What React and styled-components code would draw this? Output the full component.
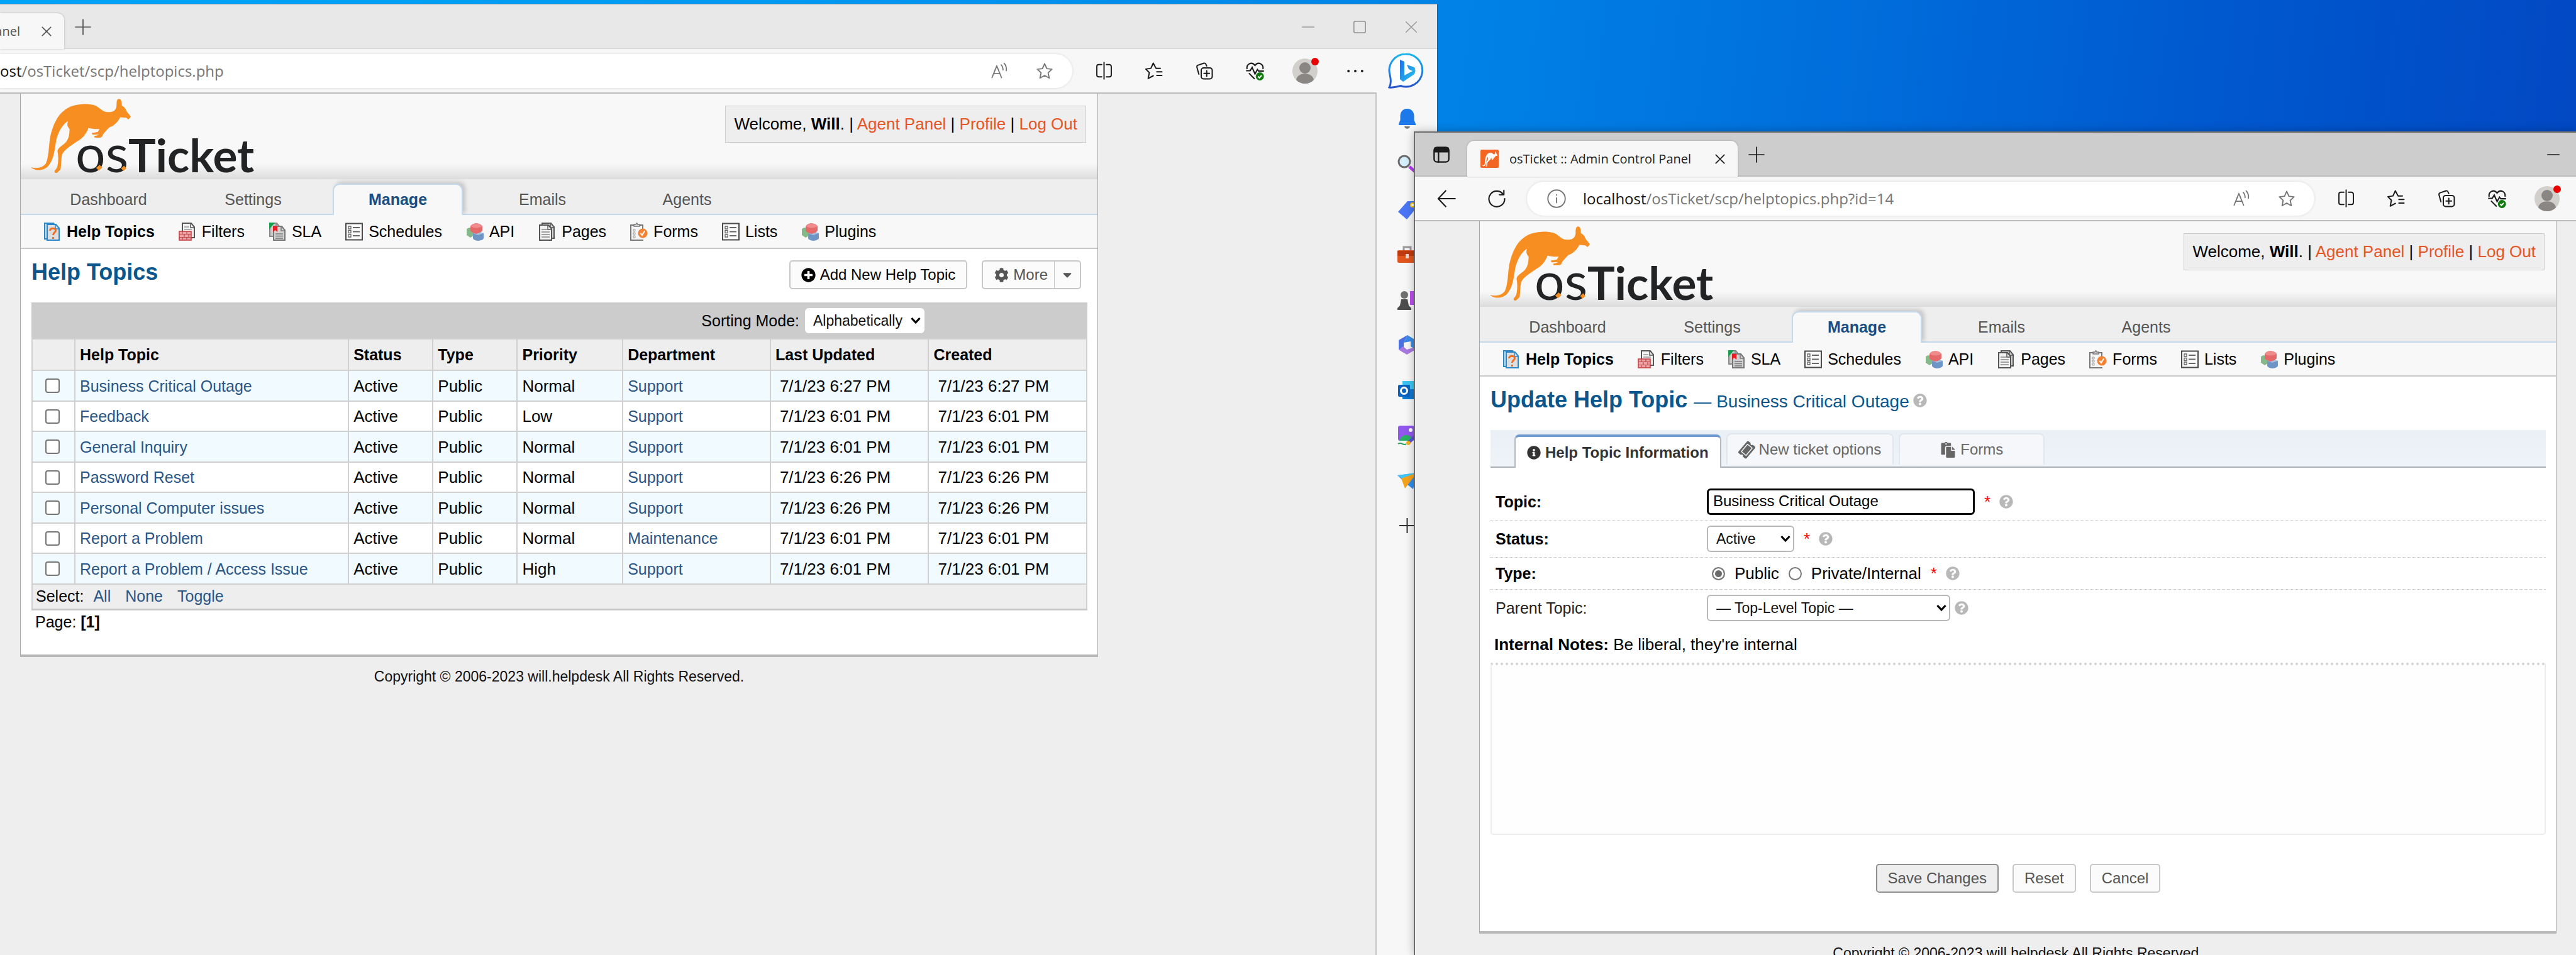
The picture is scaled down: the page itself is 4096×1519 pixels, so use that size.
import React from "react";
import styled, { createGlobalStyle, css } from "styled-components";
import {
  FaPlusCircle, FaCog, FaCaretDown, FaInfoCircle, FaQuestionCircle, FaTicketAlt, FaPaste,
} from "react-icons/fa";

const sans = `"Liberation Sans", Arial, sans-serif`;
const ui = `"Open Sans", "Noto Sans", sans-serif`;

const GlobalStyle = createGlobalStyle`
  *, *::before, *::after { box-sizing: border-box; }
  html, body, #root { height: 100%; margin: 0; }
  body { overflow: hidden; font-family: ${sans}; font-size: 25px; color: #000; }
  button, input, select, textarea { font-family: inherit; color: inherit; margin: 0; }
  a { text-decoration: none; }
`;

/* ---------- desktop and windows ---------- */

const Desktop = styled.main`
  position: relative;
  height: 100vh;
  overflow: hidden;
  background: linear-gradient(97deg, #00a4f8 0%, #0098f2 30%, #0080e5 56%, #006fdc 68%, #0058ce 83%, #0244c0 100%);
`;

const Window = styled.section`
  position: absolute;
  display: flex;
  flex-direction: column;
  overflow: hidden;
  bottom: 0;
  background: #f7f7f7;
`;

const ListWindow = styled(Window)`
  top: 6px;
  left: 0;
  right: 1810px;
  border-top: 1px solid #8a96a0;
  border-right: 1px solid #1f5f94;
`;

const EditWindow = styled(Window)`
  top: 209px;
  left: 2248px;
  right: 0;
  border-top: 2px solid #6d6d6d;
  border-left: 2px solid #6d6d6d;
  box-shadow: 0 0 14px rgba(0, 0, 0, 0.25);
`;

const TabStrip = styled.div`
  display: flex;
  flex: none;
  height: ${(p) => (p.$active ? 70 : 71)}px;
  background: ${(p) => (p.$active ? "#cdcdcd" : "#e8e8e8")};
  box-shadow: inset 0 -2px 0 ${(p) => (p.$active ? "#bdbdbd" : "#d9d9d9")};
`;

const BrowserTab = styled.div`
  display: flex;
  align-items: center;
  justify-content: flex-end;
  align-self: flex-end;
  height: 57px;
  width: ${(p) => p.$width}px;
  padding: 0 18px 0 ${(p) => (p.$cut ? 0 : 21)}px;
  overflow: hidden;
  background: #f7f7f7;
  border-radius: ${(p) => (p.$cut ? "0 11px 0 0" : "11px 11px 0 0")};
  box-shadow: 0 0 3px rgba(0, 0, 0, 0.25);
  font: 20px/30px ${ui};
  color: ${(p) => (p.$cut ? "#555" : "#1b1b1b")};
  white-space: nowrap;
`;

const TabTitle = styled.span`
  flex: ${(p) => (p.$cut ? "none" : 1)};
  margin-left: ${(p) => (p.$cut ? 0 : 17)}px;
  margin-right: ${(p) => (p.$cut ? 32 : 0)}px;
`;

const PlainButton = styled.button`
  display: flex;
  align-items: center;
  justify-content: center;
  flex: none;
  width: ${(p) => p.$width || 80}px;
  padding: 0;
  border: 0;
  background: none;
  color: ${(p) => p.$color || "#1b1b1b"};
`;

const Caption = styled.div`
  display: flex;
  margin-left: auto;
`;

const Toolbar = styled.div`
  display: flex;
  align-items: center;
  flex: none;
  height: 69px;
  padding: 0 ${(p) => p.$right}px 0 ${(p) => p.$left}px;
`;

const AddressBar = styled.div`
  display: flex;
  align-items: center;
  flex: 1;
  height: 54px;
  margin: 0 10px 0 ${(p) => (p.$cut ? 0 : 8)}px;
  padding: 0 8px 0 ${(p) => (p.$cut ? 0 : 32)}px;
  background: #fff;
  border-radius: ${(p) => (p.$cut ? "0 27px 27px 0" : "27px")};
  box-shadow: 0 0 4px rgba(0, 0, 0, 0.12);
  font: 24px/32px ${ui};
  color: #767676;
`;

const Url = styled.span`
  flex: 1;
  margin-left: ${(p) => (p.$cut ? 0 : 27)}px;
  b { font-weight: 400; color: #111; }
`;

const WindowBody = styled.div`
  display: flex;
  flex: 1;
  min-height: 0;
`;

const Viewport = styled.div`
  flex: 1;
  min-width: 0;
  padding: 0 ${(p) => p.$right}px 0 ${(p) => p.$left}px;
  background: #eee;
  border-top: 2px solid #bcbcbc;
  border-right: ${(p) => (p.$edge ? "2px solid #c4c4c4" : 0)};
`;

const Sidebar = styled.nav`
  display: flex;
  flex-direction: column;
  align-items: center;
  width: 96px;
  padding-top: 6px;
`;

const SideButton = styled(PlainButton)`
  height: 72px;
`;

/* ---------- osTicket page ---------- */

const Container = styled.div`
  background: #fff;
  border: 1px solid #aaa;
  border-top: 0;
  border-bottom: 4px solid #b8b8b8;
`;

const Header = styled.header`
  display: flex;
  justify-content: space-between;
  align-items: flex-start;
  height: 136px;
  padding: 0 18px 0 7px;
  background: linear-gradient(#f8f8f8 82%, #dcdcdc);
`;

const Welcome = styled.p`
  margin: 19px 0 0;
  padding: 0 13px;
  border: 1px solid #ccc;
  background: #eee;
  font-size: 26px;
  line-height: 57px;
  white-space: pre;
  a { color: #e65524; }
`;

const MainNav = styled.nav`
  display: flex;
  align-items: flex-end;
  gap: 23px;
  height: 57px;
  padding-left: 36px;
  background: #eee;
  box-shadow: inset 0 -2px 0 #c5d9ec;
`;

const MainTab = styled.a`
  width: 207px;
  height: 50px;
  border: 2px solid transparent;
  border-bottom: 0;
  font-size: 25px;
  line-height: 46px;
  text-align: center;
  color: #555;
  ${(p) => p.$active && css`
    border-color: #c5d9ec;
    border-radius: 11px 11px 0 0;
    background: #f8f8f8;
    box-shadow: 4px -3px 6px rgba(0, 0, 0, 0.17);
    clip-path: inset(-12px -12px 0 -12px);
    font-weight: 700;
    color: #184e81;
  `}
`;

const SubNav = styled.nav`
  display: flex;
  align-items: center;
  gap: 38px;
  height: 54px;
  padding-left: 36px;
  background: #f8f8f8;
  border-bottom: 2px solid #c9c9c9;
`;

const SubLink = styled.a`
  display: flex;
  align-items: center;
  gap: 9px;
  font-size: 25px;
  line-height: 30px;
  font-weight: ${(p) => (p.$active ? 700 : 400)};
  color: #000;
`;

const Content = styled.div`
  padding: 0 16px 0 17px;
`;

const Title = styled.h2`
  display: flex;
  align-items: baseline;
  align-self: flex-start;
  margin: 0;
  font-size: 36px;
  line-height: 38px;
  color: #0a568e;
  white-space: pre;
  small { font-size: 28px; font-weight: 400; }
`;

const Copyright = styled.footer`
  padding-top: 17px;
  font-size: 23px;
  line-height: 28px;
  text-align: center;
  color: #111;
`;

const TitleRow = styled.div`
  display: flex;
  align-items: center;
  gap: 23px;
  padding: 18px 10px 21px 0;
  ${Title} { flex: 1; }
`;

const Button = styled.button`
  display: flex;
  align-items: center;
  gap: 7px;
  height: 46px;
  padding: 0 17px;
  border: 2px solid ${(p) => (p.$primary ? "#8f8f8f" : "#c8c8c8")};
  border-radius: 5px;
  background: ${(p) => (p.$primary ? "#eee" : "#fbfbfb")};
  font-size: 24px;
  line-height: 30px;
  color: ${(p) => (p.$dark ? "#000" : "#555")};
`;

const SplitButton = styled.div`
  display: flex;
  ${Button}:first-child { border-right: 0; border-radius: 5px 0 0 5px; padding: 0 10px 0 18px; }
  ${Button}:last-child { border-left-width: 1px; border-radius: 0 5px 5px 0; padding: 0 9px; }
`;

/* ---------- form controls ---------- */

const SelectBox = styled.span`
  position: relative;
  display: inline-flex;
  width: ${(p) => p.$width}px;
  svg { position: absolute; right: 6px; top: 50%; margin-top: -6px; pointer-events: none; }
`;

const NativeSelect = styled.select`
  appearance: none;
  width: 100%;
  height: ${(p) => (p.$bare ? 40 : 42)}px;
  padding: 0 0 0 13px;
  border: ${(p) => (p.$bare ? 0 : "2px solid #b9b9b9")};
  border-radius: 6px;
  background: #fff;
  font-size: 23px;
  color: #111;
`;

const Checkbox = styled.input`
  appearance: none;
  display: block;
  width: 23px;
  height: 23px;
  margin: 0 auto;
  border: 2px solid #767676;
  border-radius: 4px;
  background: #fff;
`;

const Radio = styled.input`
  appearance: none;
  width: 21px;
  height: 21px;
  margin: 0 15px 0 0;
  border: 2px solid #767676;
  border-radius: 50%;
  background: #fff;
  &:checked { box-shadow: inset 0 0 0 3px #fff; background: #6b6b6b; }
`;

/* ---------- topics table ---------- */

const Table = styled.table`
  width: 100%;
  table-layout: fixed;
  border-collapse: collapse;
  font-size: 25px;
  line-height: 30px;
  caption {
    height: 57px;
    padding: 9px 259px 8px 0;
    background: #ccc;
  }
  th, td { padding: 0 0 0 7px; border: 2px solid #d0d0d0; text-align: left; white-space: nowrap; }
  th { height: 50px; background: #eee; }
  td a { font-size: 25px; color: #2a5587; }
  tbody td { height: 48px; font-size: 26px; }
  tbody tr:nth-child(odd) td { height: 49px; background: #f1faff; }
  td:first-child { padding: 0 4px 0 0; }
  tfoot td:first-child { height: 40px; padding: 0 0 2px 5px; background: #eee; border-bottom: 3px solid #c9c9c9; }
`;

const SortLine = styled.div`
  display: flex;
  align-items: center;
  justify-content: flex-end;
  gap: 9px;
`;

const SelectLinks = styled.div`
  display: flex;
  gap: 23px;
  span { margin-right: -8px; }
`;

const DateCell = styled.td`
  && { padding-left: 14px; }
`;

const Pager = styled.p`
  margin: 0;
  padding: 3px 6px 37px;
  font-size: 25px;
  line-height: 30px;
`;

/* ---------- edit form ---------- */

const FormTabs = styled.div`
  display: flex;
  gap: 8px;
  height: 60px;
  margin-top: 5px;
  padding: 0 38px;
  background: linear-gradient(#eaf0f6, #eff3f8);
  box-shadow: inset 0 -2px 0 #aab0b6;
`;

const FormTab = styled.button`
  display: flex;
  align-items: center;
  justify-content: center;
  gap: 7px;
  min-width: ${(p) => p.$min || 0}px;
  height: 50px;
  margin-top: 5px;
  padding: 0 18px;
  border: 2px solid #e2e6ee;
  border-bottom: 0;
  border-radius: 8px 8px 0 0;
  background: #f5f7fb;
  font-size: 24px;
  line-height: 30px;
  color: #666;
  ${(p) => p.$active && css`
    height: 53px;
    margin-top: 7px;
    padding: 0 18px;
    border: 2px solid #b4bac2;
    border-top: 4px solid #6f9bd1;
    border-bottom: 0;
    background: #fff;
    font-weight: 700;
    color: #333;
  `}
`;

const Form = styled.form`
  padding-top: 25px;
`;

const Field = styled.div`
  display: grid;
  grid-template-columns: 344px 1fr;
  align-items: center;
  padding: 8px 0;
  border-bottom: 1px dotted ${(p) => (p.$last ? "transparent" : "#c4c4c4")};
  font-size: 26px;
  line-height: 34px;
`;

const FieldLabel = styled.label`
  padding-left: 8px;
  font-size: 25px;
  font-weight: ${(p) => (p.$plain ? 400 : 700)};
  color: ${(p) => (p.$plain ? "#222" : "#000")};
`;

const Controls = styled.div`
  display: flex;
  align-items: center;
`;

const RadioGroup = styled.div`
  display: flex;
  gap: 15px;
  margin-left: 8px;
  label { display: flex; align-items: center; }
`;

const TextInput = styled.input`
  width: 426px;
  height: 42px;
  padding: 0 7px 2px;
  border: 3px solid #000;
  border-radius: 6px;
  background: #fff;
  font-size: 24px;
  outline: 0;
`;

const Required = styled.span`
  margin: 0 14px 0 15px;
  color: #f00;
`;

const Help = styled(FaQuestionCircle)`
  width: 22px;
  height: 22px;
  color: #b8b8b8;
  margin-left: ${(p) => p.$gap || 0}px;
`;

const NotesLabel = styled.label`
  display: block;
  padding-left: 6px;
  font-size: 26px;
  line-height: 57px;
`;

const Notes = styled.textarea`
  display: block;
  width: 100%;
  height: 274px;
  border: 2px solid #ededed;
  border-top: 4px dotted #d4d4d4;
  border-radius: 0 0 5px 5px;
  background: #fefefe;
  resize: none;
`;

const Actions = styled.div`
  display: flex;
  justify-content: center;
  gap: 22px;
  padding: 46px 0 61px;
`;

/* ---------- drawings ---------- */

const Stroke = ({ size = 28, children, w = 1.6 }) => (
  <svg width={size} height={size} viewBox="0 0 24 24" fill="none" stroke="currentColor" strokeWidth={w} strokeLinecap="round" strokeLinejoin="round" aria-hidden="true">
    {children}
  </svg>
);

const Chevron = () => (
  <svg width="16" height="12" viewBox="0 0 16 12" fill="none" stroke="#000" strokeWidth="3.2" aria-hidden="true">
    <path d="M1.5 2 8 9l6.500-7" />
  </svg>
);

const KANGAROO = "M488 27C500 28 505 40 504 62C518 68 525 80 530 94L550 118C550 124 546 126 538 135L527 126L496 123C485 145 468 165 440 176C428 186 412 205 405 215C402 226 396 230 385 230L362 229C356 222 364 218 372 219L386 213L352 214C344 208 348 203 358 204L378 200L388 184C370 186 348 184 330 179C320 205 305 230 270 250C240 272 205 290 192 318C186 345 188 372 184 396C178 402 172 408 166 413C156 417 150 410 154 402C160 396 166 388 168 378C174 350 172 320 168 300C170 285 185 276 205 260C225 245 231 215 231 185C220 172 216 160 223 144C195 160 175 195 162 240C152 300 150 340 120 378C100 400 60 410 28 384C55 392 85 390 105 368C122 340 122 280 128 240C135 190 160 120 200 90C240 55 310 48 360 60C385 68 395 88 420 95C440 97 460 98 470 82C479 70 476 55 477 45C478 34 482 27 488 27Z";

const Logo = () => (
  <svg width="375" height="137" viewBox="0 0 1230 450" role="img" aria-label="osTicket">
    <path d={KANGAROO} fill="#f68e22" />
    <text x="262" y="410" fontFamily="Lato, 'Open Sans', sans-serif" fill="#212325">
      <tspan fontSize="276" fontWeight="400">os</tspan><tspan fontSize="240" fontWeight="700">Ticket</tspan>
    </text>
    <path d="m370 388 18-16 14 14-18 16zM500 390l16-14 12 14-16 14z" fill="#f68e22" />
  </svg>
);

const Sheet = ({ x = 0, y = 0, w = 20, h = 26, fill = "#f2f2f2", stroke = "#555" }) => (
  <g transform={`translate(${x} ${y})`}>
    <path d={`M1 1H${w - 6}L${w - 1} 7V${h - 1}H1Z`} fill={fill} stroke={stroke} strokeWidth="2" />
    <path d={`M${w - 7} 1V8H${w - 1}`} fill="none" stroke={stroke} strokeWidth="1.5" />
  </g>
);

const NavIcon = ({ kind }) => (
  <svg width="28" height="29" viewBox="0 0 28 29" aria-hidden="true">
    {kind === "help" && <>
      <Sheet x={1} w={21} h={27} stroke="#2b87c8" fill="#cfe3f2" />
      <Sheet x={5} y={2} w={21} h={27} stroke="#2b87c8" fill="#dcdfe2" />
      <path d="M10.500 13c0-5 9-5 9 0 0 3-4 3-4 7M15.500 23v3" fill="none" stroke="#f36f21" strokeWidth="3" />
    </>}
    {kind === "filter" && <>
      <Sheet x={5} w={21} h={25} />
      <path d="M9 7h8M9 11h12" stroke="#999" strokeWidth="1.500" />
      <rect x="1" y="14" width="19" height="14" fill="#eda3a5" stroke="#c43a3e" strokeWidth="1.500" />
      <path d="M1 18.500h19M1 23.500h19M6 14v4M13 14v4M9 19v4M16 19v4M6 24v4M13 24v4" stroke="#c0494c" strokeWidth="1.200" />
    </>}
    {kind === "sla" && <>
      <Sheet x={1} w={18} h={23} fill="#c9c9c9" stroke="#888" />
      <path d="M1 0h9L1 11z" fill="#14a04a" />
      <Sheet x={7} y={5} w={20} h={24} fill="#d2d2d2" stroke="#777" />
      <path d="M7 6h7v9l-3.500-3L7 15z" fill="#ed1c24" />
      <path d="M11 18h12M11 21.500h12M11 25h12" stroke="#777" strokeWidth="1.600" />
    </>}
    {kind === "list" && <>
      <rect x="1" y="1.500" width="26" height="26" fill="#fbfbfb" stroke="#4b4b4b" strokeWidth="2" />
      <path d="M12 8h11M12 14.500h11M12 21h11" stroke="#666" strokeWidth="2" />
      <path d="M5 6h4v4H5zM5 12.500h4v4H5zM5 19h4v4H5z" fill="none" stroke="#666" strokeWidth="1.300" />
    </>}
    {kind === "api" && <>
      <path d="M1 11q0-2 5-3l6 3v10l-5 3-6-4z" fill="#86b98a" />
      <path d="M11 17l8-3 9 3v8q-1 3-9 4-7-1-8-4z" fill="#6f95c6" />
      <path d="M11 17l8 3 9-3-9-3z" fill="#a3bee0" />
      <path d="M7 6q2-4 9-5 8 1 10 5v7q-2 3-10 5-7-2-9-5z" fill="#e5686b" />
      <path d="M7 6q9 5 19 0-2-4-10-5-7 1-9 5z" fill="#f08b8b" />
    </>}
    {kind === "page" && <>
      <Sheet x={5} w={21} h={26} stroke="#555" fill="#d8d8d8" />
      <Sheet x={1} y={3} w={21} h={26} stroke="#555" />
      <path d="M5 11h9M5 15h13M5 19h13M5 23h13" stroke="#888" strokeWidth="1.500" />
    </>}
    {kind === "form" && <>
      <path d="M20 11V4H1v24h20" fill="#f6f6f6" stroke="#777" strokeWidth="2" />
      <path d="M6 6V3h3l1.500-2.500L12 3h3v3z" fill="#ddd" stroke="#777" strokeWidth="1.400" />
      <path d="M5 11h3v3H5zM5 16h3v3H5zM5 21h3v3H5z" fill="none" stroke="#999" />
      <circle cx="20" cy="17" r="7.500" fill="#f58230" />
      <path d="m16.500 17 2.500 3 4-6.500" fill="none" stroke="#fff" strokeWidth="2" />
    </>}
  </svg>
);

const IconStar = () => <Stroke><path d="m12 2 3 6.700 7 .8-5.200 4.900 1.500 7.200L12 18l-6.300 3.600 1.500-7.200L2 9.500l7-.8z" /></Stroke>;
const IconRead = () => (
  <Stroke><path d="M2 21 8.500 5 15 21M4.500 15.500h8M14.500 3.500c2 2 2.500 4 2.500 7M18.500 1.500c2.500 2.500 3.500 6 3 10" /></Stroke>
);
const IconPlus = ({ size = 26 }) => <Stroke size={size}><path d="M12 1v22M1 12h22" /></Stroke>;
const IconClose = ({ size = 16, w = 2.6 }) => <Stroke size={size} w={w}><path d="m2 2 20 20M22 2 2 22" /></Stroke>;
const IconMin = () => <Stroke size={20} w={2}><path d="M1 12h22" /></Stroke>;

const ToolIcons = () => (
  <>
    <PlainButton aria-label="Split screen"><Stroke size={29}><path d="M12 1v22M9 4H5a2.500 2.500 0 0 0-2.500 2.500v11A2.500 2.500 0 0 0 5 20h4M15 4h4a2.500 2.500 0 0 1 2.500 2.500v11A2.500 2.500 0 0 1 19 20h-4" /></Stroke></PlainButton>
    <PlainButton aria-label="Favorites"><Stroke size={30}><path d="M20 8.500h-5.500L11 2 8 8.500l-6.500 1L6 14l-1.500 7.500L11 18M15.500 13H22M15.500 17.500H22" /></Stroke></PlainButton>
    <PlainButton aria-label="Collections"><Stroke size={30}><path d="M15 5.500 14 3.500A2 2 0 0 0 11.500 2L4 4.500A2.500 2.500 0 0 0 2.500 7L5 16" /><rect x="8" y="8" width="14" height="14" rx="3" /><path d="M15 11.500v7M11.500 15h7" /></Stroke></PlainButton>
    <PlainButton aria-label="Browser essentials">
      <svg width="31" height="31" viewBox="0 0 24 24" fill="none" stroke="#1b1b1b" strokeWidth="1.600" aria-hidden="true">
        <path d="M2.200 10C1 4 8 0 12 5.500 16 0 23 4 21.800 10M1 12h5l2.500-4 3.500 8 3-5.500 1.500 2H23M4.500 15l7 7" />
        <circle cx="18" cy="19" r="5" fill="#0f7b0f" stroke="none" /><path d="m15.800 19 1.600 1.700 2.800-3" stroke="#fff" />
      </svg>
    </PlainButton>
    <PlainButton aria-label="Profile">
      <svg width="46" height="46" viewBox="0 0 46 46" aria-hidden="true">
        <circle cx="23" cy="23" r="20" fill="#d2d0cd" />
        <circle cx="23" cy="18" r="9" fill="#8a8683" /><path d="M9 37c2-13 26-13 28 0-7 8-21 8-28 0z" fill="#8a8683" />
        <circle cx="39" cy="8" r="6" fill="#e80000" />
      </svg>
    </PlainButton>
  </>
);

const Bing = () => (
  <svg width="56" height="58" viewBox="0 0 56 58" aria-hidden="true">
    <defs>
      <linearGradient id="bingRing" x1="0" y1="0" x2="0" y2="1"><stop offset="0" stopColor="#19b5f1" /><stop offset="1" stopColor="#2552d0" /></linearGradient>
      <linearGradient id="bingMark" x1="0" y1="0" x2="1" y2="1"><stop offset="0" stopColor="#1f6fe5" /><stop offset="1" stopColor="#27c6ee" /></linearGradient>
    </defs>
    <path d="M28 2a26 26 0 1 1-8 50.500C14 54 6 56 2 55c3-5 3-12 1-20A26 26 0 0 1 28 2z" fill="#fff" stroke="url(#bingRing)" strokeWidth="3" />
    <path d="M19 11l7 3v22l13-7-6-3-3-7 12 4c3 6 1 11-3 13L24 46l-5-4z" fill="url(#bingMark)" />
  </svg>
);

const SideIcon = ({ kind }) => (
  <svg width="31" height="36" viewBox="0 0 31 36" aria-hidden="true">
    {kind === "Notifications" && <><path d="M15.500 2c-8 0-11 6-11 12v6L2 26v2h27v-2l-2.500-6v-6c0-6-3-12-11-12z" fill="#1d78ea" /><path d="M11 30h9c-1 5-8 5-9 0z" fill="#777" /></>}
    {kind === "Search" && <><path d="m19 22 10 9" stroke="#b43df0" strokeWidth="5" /><circle cx="11" cy="14" r="9" fill="#d5effd" stroke="#6b6b6b" strokeWidth="3" /></>}
    {kind === "Shopping" && <><path d="M16 5h13v12L15 34 1 22z" fill="#4a76f5" /><circle cx="24" cy="11" r="3" fill="#fff" stroke="#f7c600" strokeWidth="2" /></>}
    {kind === "Tools" && <><path d="M10 12V6h11v6" fill="none" stroke="#9a9a9a" strokeWidth="3" /><rect x="0" y="11" width="31" height="20" rx="2" fill="#e2561d" /><path d="M0 12h31v8H0z" fill="#bf3a0e" /><rect x="13" y="17" width="5" height="7" fill="#ddd" /></>}
    {kind === "Games" && <><path d="M20 4h11v22H20z" fill="#c04df5" /><circle cx="11" cy="10" r="6" fill="#6f6f6f" /><path d="M6 17h10l2 10 4 4v3H0v-3l4-4z" fill="#4d4d4d" /></>}
    {kind === "Microsoft 365" && <><path d="M16 2 2 10v15l8 5V14z" fill="#4a6fe0" /><path d="M2 25l13 8 14-8-4-3-10 3-6-5z" fill="#a779e0" /><path d="M16 2l13 8v15l-8-5V12l-11 2z" fill="#3a8be8" /></>}
    {kind === "Outlook" && <><rect x="8" y="3" width="23" height="28" fill="#3cc5f3" /><path d="M8 16h23v16H8z" fill="#0f78d0" /><rect x="1" y="9" width="19" height="19" rx="2" fill="#0a63c0" /><circle cx="10.500" cy="18.500" r="5" fill="none" stroke="#fff" strokeWidth="3" /></>}
    {kind === "Image Creator" && <><rect x="1" y="2" width="26" height="24" rx="3" fill="#9157ee" /><path d="M3 26c4-12 18-12 22 0z" fill="#26b262" /><circle cx="21" cy="9" r="3" fill="#fff" /><path d="m18 29 13-13" stroke="#5b4fe0" strokeWidth="5" /><path d="M1 31c6-4 8 4 13 0" fill="none" stroke="#23a55c" strokeWidth="2" /><path d="M14 28c4-4 9 0 6 4-3 2-6 1-6-4z" fill="#f4b01a" /></>}
    {kind === "Drop" && <><path d="M0 9 31 5 25 31l-9-7z" fill="#2e8ff0" /><path d="M0 9 31 5 12 17z" fill="#41c5f8" /><path d="m6 14 25-9-19 25z" fill="#f5a31a" /></>}
    {kind === "Customize" && <path d="M15.500 5v24M3 17h25" stroke="#333" strokeWidth="2" />}
  </svg>
);

const SIDE_ITEMS = ["Notifications", "Search", "Shopping", "Tools", "Games", "Microsoft 365", "Outlook", "Image Creator", "Drop", "Customize"];

const MAIN_TABS = ["Dashboard", "Settings", "Manage", "Emails", "Agents"];
const SUB_LINKS = [
  ["Help Topics", "help"], ["Filters", "filter"], ["SLA", "sla"], ["Schedules", "list"],
  ["API", "api"], ["Pages", "page"], ["Forms", "form"], ["Lists", "list"], ["Plugins", "api"],
];

const TOPICS = [
  ["Business Critical Outage", "Normal", "Support", "7/1/23 6:27 PM"],
  ["Feedback", "Low", "Support", "7/1/23 6:01 PM"],
  ["General Inquiry", "Normal", "Support", "7/1/23 6:01 PM"],
  ["Password Reset", "Normal", "Support", "7/1/23 6:26 PM"],
  ["Personal Computer issues", "Normal", "Support", "7/1/23 6:26 PM"],
  ["Report a Problem", "Normal", "Maintenance", "7/1/23 6:01 PM"],
  ["Report a Problem / Access Issue", "High", "Support", "7/1/23 6:01 PM"],
];

/* ---------- composed parts ---------- */

const Page = ({ children }) => (
  <>
    <Container>
      <Header>
        <Logo />
        <Welcome>
          Welcome, <strong>Will</strong>. | <a href="#agent">Agent Panel</a> | <a href="#profile">Profile</a> | <a href="#logout">Log Out</a>
        </Welcome>
      </Header>
      <MainNav>
        {MAIN_TABS.map((t) => <MainTab key={t} href="#tab" $active={t === "Manage"}>{t}</MainTab>)}
      </MainNav>
      <SubNav>
        {SUB_LINKS.map(([label, kind]) => (
          <SubLink key={label} href="#sub" $active={kind === "help"}><NavIcon kind={kind} />{label}</SubLink>
        ))}
      </SubNav>
      <Content>{children}</Content>
    </Container>
    <Copyright>Copyright © 2006-2023 will.helpdesk All Rights Reserved.</Copyright>
  </>
);

const Select = ({ id, width, bare, children }) => (
  <SelectBox $width={width}>
    <NativeSelect id={id} $bare={bare}><option>{children}</option></NativeSelect>
    <Chevron />
  </SelectBox>
);

const TopicsPage = () => (
  <Page>
    <TitleRow>
      <Title>Help Topics</Title>
      <Button $dark><FaPlusCircle size={23} />Add New Help Topic</Button>
      <SplitButton>
        <Button><FaCog size={23} />More</Button>
        <Button aria-label="More actions"><FaCaretDown size={22} /></Button>
      </SplitButton>
    </TitleRow>
    <Table>
      <caption>
        <SortLine>
          <label htmlFor="sort">Sorting Mode:</label>
          <Select id="sort" width={190} bare>Alphabetically</Select>
        </SortLine>
      </caption>
      <colgroup>
        <col style={{ width: 68 }} /><col />
        {[8, 8, 10, 14, 15, 15].map((w, i) => <col key={i} style={{ width: `${w}%` }} />)}
      </colgroup>
      <thead>
        <tr>
          <th aria-label="Selected" />
          {["Help Topic", "Status", "Type", "Priority", "Department", "Last Updated", "Created"].map((h) => <th key={h}>{h}</th>)}
        </tr>
      </thead>
      <tbody>
        {TOPICS.map(([name, priority, dept, date]) => (
          <tr key={name}>
            <td><Checkbox type="checkbox" aria-label={name} /></td>
            <td><a href="#topic">{name}</a></td>
            <td>Active</td>
            <td>Public</td>
            <td>{priority}</td>
            <td><a href="#dept">{dept}</a></td>
            <DateCell>{date}</DateCell>
            <DateCell>{date}</DateCell>
          </tr>
        ))}
      </tbody>
      <tfoot>
        <tr>
          <td colSpan={8}>
            <SelectLinks>
              <span>Select:</span><a href="#all">All</a><a href="#none">None</a><a href="#toggle">Toggle</a>
            </SelectLinks>
          </td>
        </tr>
      </tfoot>
    </Table>
    <Pager>Page: <strong>[1]</strong></Pager>
  </Page>
);

const EditPage = () => (
  <Page>
    <TitleRow>
      <Title>Update Help Topic <small>— Business Critical Outage</small><Help $gap={6} /></Title>
    </TitleRow>
    <FormTabs>
      <FormTab $active><FaInfoCircle size={22} />Help Topic Information</FormTab>
      <FormTab $min={265}><FaTicketAlt size={25} transform="rotate(-50)" />New ticket options</FormTab>
      <FormTab $min={232}><FaPaste size={25} />Forms</FormTab>
    </FormTabs>
    <Form>
      <Field>
        <FieldLabel htmlFor="topic">Topic:</FieldLabel>
        <Controls><TextInput id="topic" defaultValue="Business Critical Outage" /><Required>*</Required><Help /></Controls>
      </Field>
      <Field>
        <FieldLabel htmlFor="status">Status:</FieldLabel>
        <Controls><Select id="status" width={139}>Active</Select><Required>*</Required><Help /></Controls>
      </Field>
      <Field>
        <FieldLabel as="span">Type:</FieldLabel>
        <Controls>
          <RadioGroup role="radiogroup" aria-label="Type">
            <label><Radio type="radio" name="type" defaultChecked />Public</label>
            <label><Radio type="radio" name="type" />Private/Internal</label>
          </RadioGroup>
          <Required>*</Required><Help />
        </Controls>
      </Field>
      <Field $last>
        <FieldLabel htmlFor="parent" $plain>Parent Topic:</FieldLabel>
        <Controls><Select id="parent" width={387}>— Top-Level Topic —</Select><Help $gap={7} /></Controls>
      </Field>
      <NotesLabel htmlFor="notes"><strong>Internal Notes:</strong> Be liberal, they're internal</NotesLabel>
      <Notes id="notes" />
      <Actions>
        <Button type="button" $primary>Save Changes</Button>
        <Button type="button">Reset</Button>
        <Button type="button">Cancel</Button>
      </Actions>
    </Form>
  </Page>
);

export default function App() {
  return (
    <>
      <GlobalStyle />
      <Desktop>
        <ListWindow>
          <TabStrip>
            <BrowserTab $cut $width={102}>
              <TabTitle $cut>anel</TabTitle>
              <PlainButton $width={20} $color="#555" aria-label="Close tab"><IconClose /></PlainButton>
            </BrowserTab>
            <PlainButton $width={60} $color="#555" aria-label="New tab"><IconPlus /></PlainButton>
            <Caption>
              <PlainButton $width={82} $color="#999" aria-label="Minimize"><IconMin /></PlainButton>
              <PlainButton $width={82} $color="#999" aria-label="Maximize"><Stroke size={20} w={2}><rect x="1" y="1" width="22" height="22" rx="3" /></Stroke></PlainButton>
              <PlainButton $width={82} $color="#999" aria-label="Close"><IconClose size={20} w={1.8} /></PlainButton>
            </Caption>
          </TabStrip>
          <Toolbar $left={0} $right={10}>
            <AddressBar $cut>
              <Url $cut><b>ost</b>/osTicket/scp/helptopics.php</Url>
              <PlainButton $width={72} $color="#777" aria-label="Read aloud"><IconRead /></PlainButton>
              <PlainButton $width={72} $color="#777" aria-label="Add to favorites"><IconStar /></PlainButton>
            </AddressBar>
            <ToolIcons />
            <PlainButton aria-label="Settings and more"><Stroke size={26} w={3.6}><path d="M2 12h.01M12 12h.01M22 12h.01" /></Stroke></PlainButton>
            <PlainButton aria-label="Bing"><Bing /></PlainButton>
          </Toolbar>
          <WindowBody>
            <Viewport $left={32} $right={441} $edge><TopicsPage /></Viewport>
            <Sidebar>
              {SIDE_ITEMS.map((s) => <SideButton key={s} aria-label={s}><SideIcon kind={s} /></SideButton>)}
            </Sidebar>
          </WindowBody>
        </ListWindow>
        <EditWindow>
          <TabStrip $active>
            <PlainButton $width={83} aria-label="Tab actions">
              <Stroke size={28} w={2}><rect x="2" y="2" width="20" height="20" rx="4" /><path d="M8 8v14" /><path d="M3 3h18v5H3z" fill="currentColor" /></Stroke>
            </PlainButton>
            <BrowserTab $width={430}>
              <svg width="29" height="29" viewBox="0 0 29 29" aria-hidden="true">
                <rect width="29" height="29" rx="2" fill="#f26522" />
                <g transform="translate(2 2) scale(0.045 0.06)"><path d={KANGAROO} fill="#fff" stroke="#fff" strokeWidth="12" /></g>
              </svg>
              <TabTitle>osTicket :: Admin Control Panel</TabTitle>
              <PlainButton $width={20} aria-label="Close tab"><IconClose /></PlainButton>
            </BrowserTab>
            <PlainButton $width={60} aria-label="New tab"><IconPlus /></PlainButton>
            <Caption>
              <PlainButton $width={72} aria-label="Minimize"><IconMin /></PlainButton>
            </Caption>
          </TabStrip>
          <Toolbar $left={10} $right={6}>
            <PlainButton aria-label="Back"><Stroke size={30} w={1.7}><path d="M23 12H2M11 2 1.500 12 11 22" /></Stroke></PlainButton>
            <PlainButton aria-label="Refresh"><Stroke size={30} w={1.7}><path d="M20.500 7A10 10 0 1 0 22 12M21 1.500V7h-5.500" /></Stroke></PlainButton>
            <AddressBar>
              <Stroke size={30} w={1.5}><circle cx="12" cy="12" r="11" /><path d="M12 11v6M12 7v.5" /></Stroke>
              <Url><b>localhost</b>/osTicket/scp/helptopics.php?id=14</Url>
              <PlainButton $width={72} $color="#777" aria-label="Read aloud"><IconRead /></PlainButton>
              <PlainButton $width={72} $color="#777" aria-label="Add to favorites"><IconStar /></PlainButton>
            </AddressBar>
            <ToolIcons />
          </Toolbar>
          <WindowBody>
            <Viewport $left={102} $right={31}><EditPage /></Viewport>
          </WindowBody>
        </EditWindow>
      </Desktop>
    </>
  );
}
